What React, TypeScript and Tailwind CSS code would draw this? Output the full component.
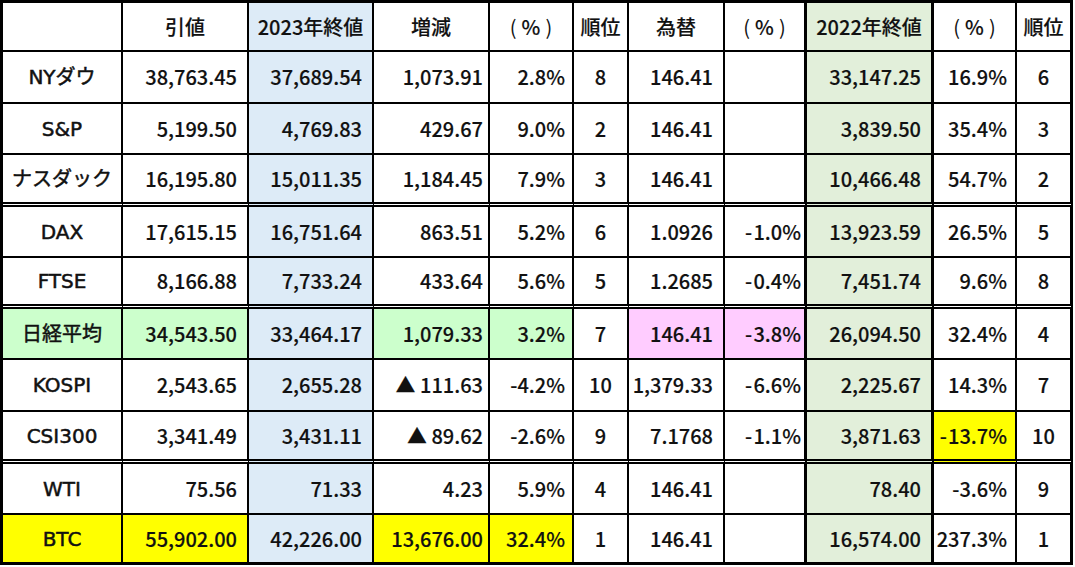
import React from "react";

type Row = {
  cells: string[];
  h: string;
  dbl: boolean;
  last?: boolean;
  bg: Record<number, string>;
};

const colCls = [
  "justify-center",
  "justify-end pr-[10px]",
  "justify-end pr-[10px] bg-[#ddebf7]",
  "justify-end pr-[5px]",
  "justify-end pr-[7px]",
  "justify-center",
  "justify-end pr-[10px]",
  "justify-end pr-[3px] border-r-[3px]",
  "justify-end pr-[10px] bg-[#e2efda] border-r-[3px]",
  "justify-end pr-[8px]",
  "justify-center border-r-[3px]",
];

const header = ["", "引値", "2023年終値", "増減", "（%）", "順位", "為替", "（%）", "2022年終値", "（%）", "順位"];
const headerBg = ["", "", "bg-[#ddebf7]", "", "", "", "", "border-r-[3px]", "bg-[#e2efda] border-r-[3px]", "", "border-r-[3px]"];

const M = "-\u200A";

const rows: Row[] = [
  { cells: ["NYダウ", "38,763.45", "37,689.54", "1,073.91", "2.8%", "8", "146.41", "", "33,147.25", "16.9%", "6"], h: "h-[52px]", dbl: false, bg: {} },
  { cells: ["S&P", "5,199.50", "4,769.83", "429.67", "9.0%", "2", "146.41", "", "3,839.50", "35.4%", "3"], h: "h-[51px]", dbl: false, bg: {} },
  { cells: ["ナスダック", "16,195.80", "15,011.35", "1,184.45", "7.9%", "3", "146.41", "", "10,466.48", "54.7%", "2"], h: "h-[52px]", dbl: true, bg: {} },
  { cells: ["DAX", "17,615.15", "16,751.64", "863.51", "5.2%", "6", "1.0926", M + "1.0%", "13,923.59", "26.5%", "5"], h: "h-[51px]", dbl: false, bg: {} },
  { cells: ["FTSE", "8,166.88", "7,733.24", "433.64", "5.6%", "5", "1.2685", M + "0.4%", "7,451.74", "9.6%", "8"], h: "h-[51px]", dbl: true, bg: {} },
  {
    cells: ["日経平均", "34,543.50", "33,464.17", "1,079.33", "3.2%", "7", "146.41", M + "3.8%", "26,094.50", "32.4%", "4"],
    h: "h-[51px]",
    dbl: false,
    bg: { 0: "bg-[#ccffcc]", 1: "bg-[#ccffcc]", 3: "bg-[#ccffcc]", 4: "bg-[#ccffcc]", 6: "bg-[#ffccff]", 7: "bg-[#ffccff]" },
  },
  { cells: ["KOSPI", "2,543.65", "2,655.28", "▲ 111.63", "-4.2%", "10", "1,379.33", M + "6.6%", "2,225.67", "14.3%", "7"], h: "h-[52px]", dbl: false, bg: {} },
  { cells: ["CSI300", "3,341.49", "3,431.11", "▲ 89.62", "-2.6%", "9", "7.1768", M + "1.1%", "3,871.63", M + "13.7%", "10"], h: "h-[52px]", dbl: true, bg: { 9: "bg-[#ffff00]" } },
  { cells: ["WTI", "75.56", "71.33", "4.23", "5.9%", "4", "146.41", "", "78.40", "-3.6%", "9"], h: "h-[51px]", dbl: false, bg: {} },
  {
    cells: ["BTC", "55,902.00", "42,226.00", "13,676.00", "32.4%", "1", "146.41", "", "16,574.00", "237.3%", "1"],
    h: "h-[50px]",
    dbl: false,
    last: true,
    bg: { 0: "bg-[#ffff00]", 1: "bg-[#ffff00]", 3: "bg-[#ffff00]", 4: "bg-[#ffff00]" },
  },
];

function Cell({ children, cls }: { children: React.ReactNode; cls: string }) {
  return <div className={`flex items-center border-r-2 border-black whitespace-nowrap ${cls}`}>{children}</div>;
}

export default function App() {
  return (
    <div
      className="w-[1075px] h-[567px] bg-white text-[#111]"
      style={{ fontFamily: '"Noto Sans CJK JP", "Noto Sans", sans-serif' }}
    >
      <div className="inline-grid grid-cols-[120px_126px_125px_116px_84px_55px_96px_82px_127px_83px_56px] border-l-[3px] border-t-[3px] border-black text-[20px] font-medium leading-none [-webkit-text-stroke:0.15px_#111]">
        {header.map((t, i) => (
          <Cell key={"h" + i} cls={`justify-center h-[49px] border-b-2 ${headerBg[i]}`}>
            {t === "（%）" ? (
              <span className="flex items-center gap-[5px]">
                <span className="font-normal [-webkit-text-stroke:0px]">(</span>
                <span>%</span>
                <span className="font-normal [-webkit-text-stroke:0px]">)</span>
              </span>
            ) : (
              <span>{t}</span>
            )}
          </Cell>
        ))}
        {rows.map((r, ri) =>
          r.cells.map((t, ci) => {
            const bottom = r.last ? "border-b-[3px]" : r.dbl ? "border-b-[5px] [border-bottom-style:double]" : "border-b-2";
            const bg = r.bg[ci] ?? "";
            let base = colCls[ci];
            if (bg) base = base.replace("bg-[#ddebf7]", "").replace("bg-[#e2efda]", "");
            return (
              <Cell key={ri + "-" + ci} cls={`${base} ${bg} ${r.h} ${bottom}`}>
                {ci === 0 ? (
                  <span className="font-['DejaVu_Sans','Noto_Sans_CJK_JP',sans-serif] font-normal text-[20px] [-webkit-text-stroke:0.5px_#111]">{t}</span>
                ) : (
                  <span>{t}</span>
                )}
              </Cell>
            );
          })
        )}
      </div>
    </div>
  );
}
